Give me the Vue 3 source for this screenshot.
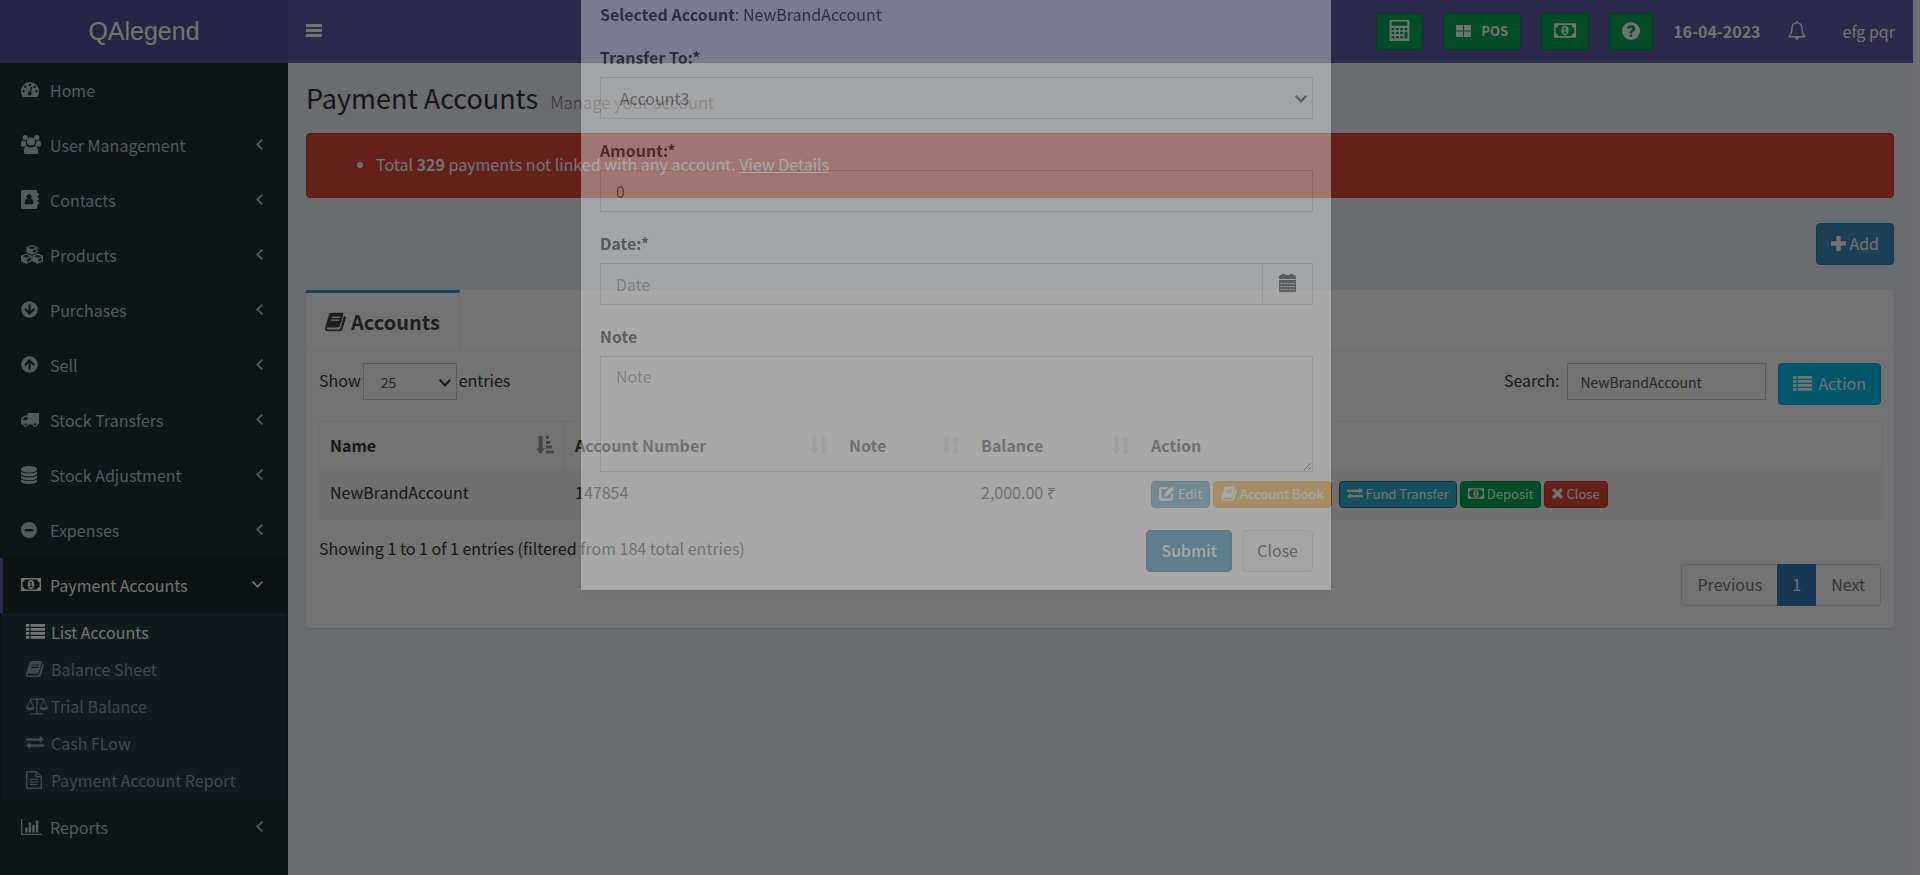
<script setup>
import { h, ref } from 'vue'

const glyphs = {
  bars: [16, 13, 'M0 0h16v3H0zM0 5h16v3H0zM0 10h16v3H0z'],
  home: [18, 15, 'M9 0a9 9 0 0 1 9 9c0 2-.5 3.900-1.400 5.400q-.3.600-1 .600H2.400q-.7 0-1-.6A10 10 0 0 1 0 9a9 9 0 0 1 9-9zM2.500 8a1.200 1.200 0 1 0 .1 0zM4.300 3.600a1.200 1.200 0 1 0 .1 0zM9 1.700a1.200 1.200 0 1 0 .1 0zM13.600 3.600a1.200 1.200 0 1 0 .1 0zM15.500 8a1.200 1.200 0 1 0 .1 0zM10 4.800l-1.300 4.700a2 2 0 1 0 1.300.4L11.200 5.200z'],
  users: [20, 19, 'M4.200 0a2.600 2.600 0 1 1 0 5.200a2.600 2.600 0 0 1 0-5.200zM15.800 0a2.600 2.600 0 1 1 0 5.200a2.600 2.600 0 0 1 0-5.200zM10 2.600a4 4 0 1 1 0 8a4 4 0 0 1 0-8zM5 6.200c-.3 1.700 0 3.100.9 4.300-1 0-1.900.4-2.500 1.100H1.700Q0 11.600 0 10c0-2.500.4-4.700 1.800-4.700 1 .8 2.200 1.100 3.200.9zM15 6.200c.3 1.700 0 3.100-.9 4.300 1 0 1.900.4 2.500 1.100h1.700q1.700 0 1.700-1.600c0-2.500-.4-4.700-1.800-4.700-1 .8-2.200 1.100-3.200.9zM6 11.200c2.400 1.700 5.600 1.700 8 0 2.400 0 3.200 2 3.200 5.200q0 2.600-2.600 2.600H5.400q-2.600 0-2.600-2.600c0-3.200.8-5.200 3.200-5.200z'],
  contacts: [18, 19, 'M1.600 0h13q1.600 0 1.600 1.600V3H17q.6 0 .6.600v1.800q0 .6-.6.600h-.8v1.200h.8q.6 0 .6.600v1.800q0 .6-.6.600h-.8v1.200h.8q.6 0 .6.600v1.800q0 .6-.6.600h-.8v3q0 1.600-1.600 1.600h-13Q0 19 0 17.400V1.600Q0 0 1.600 0zM8.100 4.200a2.600 2.600 0 1 0 0 5.200a2.600 2.600 0 0 0 0-5.200zM6 9.100c-1.700 0-2.200 1.600-2.200 3.600q0 1.500 1.400 1.500H11q1.400 0 1.400-1.500c0-2-.5-3.600-2.200-3.600-1.200 1-3 1-4.200 0z'],
  products: [22, 19, 'M11 0l5.500 2.300v4.900L11 9.700 5.500 7.200V2.300zM11 1.200L7.300 2.700 11 4.300l3.700-1.600zM11.800 8l3.400-1.500V3.900l-3.400 1.500zM5.500 8.400l5.300 2.300v5.500l-5.300 2.600L0 16.300v-5.600zM5.500 9.700l-3.700 1.500 3.700 1.600 3.700-1.600zM6.200 17l3.400-1.600v-2.900L6.200 14zM16.500 8.400l5.500 2.300v5.600l-5.500 2.500-5.300-2.600v-5.500zM16.500 9.700l-3.700 1.500 3.700 1.600 3.700-1.600zM17.200 17l3.400-1.600v-2.900L17.200 14z'],
  purchases: [512, 512, 'M504 256c0 137-111 248-248 248S8 393 8 256 119 8 256 8s248 111 248 248zm-143.600-28.900L288 302.600V120c0-13.300-10.700-24-24-24h-16c-13.300 0-24 10.700-24 24v182.600l-72.400-75.500c-9.300-9.700-24.800-9.900-34.300-.4l-10.900 11c-9.400 9.400-9.400 24.600 0 33.900L239 404.300c9.400 9.400 24.600 9.400 33.900 0l132.700-132.700c9.400-9.400 9.400-24.600 0-33.900l-10.900-11c-9.500-9.500-25-9.300-34.300.4z', 17, 17],
  sell: [512, 512, 'M8 256C8 119 119 8 256 8s248 111 248 248-111 248-248 248S8 393 8 256zm143.600 28.900l72.400-75.500V392c0 13.300 10.700 24 24 24h16c13.300 0 24-10.700 24-24V209.400l72.400 75.500c9.300 9.700 24.800 9.900 34.300.4l10.900-11c9.400-9.400 9.400-24.600 0-33.900L273 107.700c-9.400-9.400-24.600-9.400-33.900 0L106.300 240.400c-9.400 9.400-9.400 24.600 0 33.900l10.900 11c9.600 9.500 25.100 9.300 34.400-.4z', 17, 17],
  transfers: [18, 14, 'M7.500 0H17q1 0 1 1v9.800q0 .7-1 .7h-.8a2.300 2.300 0 1 1-4.600 0H6.900a2.300 2.300 0 1 1-4.600 0H.6Q0 11.500 0 10.800V6.700q0-.8.5-1.300l2.400-2.500q.5-.5 1.200-.5h2.400V1q0-1 1-1zM4.200 3.700L1.600 6.400v.5h4.900V3.700zM4.600 10.200a1.200 1.200 0 1 0 .1 0zM13.900 10.200a1.200 1.200 0 1 0 .1 0z'],
  adjust: [16, 18, 'M8 0c4.500 0 8 1.200 8 2.700v1c0 1.500-3.500 2.700-8 2.700S0 5.200 0 3.700v-1C0 1.200 3.500 0 8 0zM0 5.800c3 2 13 2 16 0v1.900c0 1.500-3.500 2.600-8 2.600S0 9.200 0 7.700zM0 9.700c3 2 13 2 16 0v1.800c0 1.500-3.500 2.700-8 2.700S0 13 0 11.500zM0 13.500c3 2 13 2 16 0v1.800c0 1.500-3.500 2.700-8 2.700s-8-1.200-8-2.700z'],
  expenses: [16, 16, 'M8 0a8 8 0 1 1 0 16A8 8 0 0 1 8 0zM4.200 6.900q-.6 0-.6.600v1.200q0 .6.600.6h7.600q.6 0 .6-.6V7.500q0-.6-.6-.6z'],
  money: [20, 13, 'M0 0h20v13H0zM4 1.500Q3.800 3.700 1.500 4v5q2.300.3 2.500 2.500h12q.2-2.200 2.500-2.500V4Q16.200 3.700 16 1.500zM10 2c2 0 3.300 2 3.300 4.500S12 11 10 11 6.700 9 6.700 6.500 8 2 10 2zM8.300 4.500L9 5.200l.5-.3v3.400H8.400v1h3.300v-1h-1V3.500h-1z'],
  list: [19, 15, 'M0 0h3.500v2.800H0zM0 4h3.500v2.800H0zM0 8h3.500v2.800H0zM0 12h3.500v2.800H0zM4.700 0H19v2.800H4.700zM4.700 4H19v2.800H4.700zM4.700 8H19v2.800H4.700zM4.700 12H19v2.800H4.700z'],
  book: [18, 16, 'M5.400 0h9.200q1.500 0 1.100 1.600l-2.900 9.700q-.5 1.500-2 1.500H2.400c-1.200 0-1.300 1.700.3 1.700h9q.9 0 1.200-.8l3.300-10.800c1.400.4 1.900 1.100 1.500 2.300l-2.800 9.300Q14.400 16 12.900 16H2.700C.6 16-.4 14.300.2 12.700L3.300 2Q3.900 0 5.400 0zM6.200 3.400l-.3 1.100h7l.3-1.100zM5.500 5.800l-.3 1.100h7l.3-1.100z'],
  balance: [22, 18, 'M10.100 1.500a1.100 1.100 0 0 1 1.800 0H18v1.200h-.2l4.200 8.200c0 3-8.400 3-8.400 0l3.700-8.200h-5.400a1.100 1.100 0 0 1-.3.400v13.100h5.600v1.300H4.200v-1.300h6.100V3.100a1.100 1.100 0 0 1-.3-.4H4.700l3.700 8.200c0 3-8.400 3-8.400 0l4.100-8.200H4V1.500zM4.200 4.300l-3 6.300h6zM17.700 4.300l-3 6.300h6z'],
  exchange: [18, 13, 'M13.700 0L18 3.500 13.700 7V4.800H0V2.200h13.700zM4.300 6L0 9.500 4.300 13v-2.200H18V8.200H4.300z'],
  file: [16, 18, 'M1.200 0h8.600q.8 0 1.400.6l4.200 4.200q.6.600.6 1.400v10.600q0 1.200-1.200 1.200H1.200Q0 18 0 16.800V1.200Q0 0 1.200 0zM1.400 1.400v15.200h13.200V6.500H9.500V1.400zM10.900 1.800v3.300h3.300zM4 7.800h8V9H4zM4 10.300h8v1.200H4zM4 12.800h8V14H4z'],
  chart: [21, 16, 'M0 0h1.300v14.700H21V16H0zM4 8.500h2.500v5H4zM7.600 3.500h2.500v10H7.600zM11.200 5.800h2.500v7.700h-2.500zM14.800 1.500h2.500v12h-2.500z'],
  left: [7, 11, 'M5.700 0L7 1.200 2.600 5.500 7 9.800 5.700 11 0 5.500z'],
  down: [11, 7, 'M0 1.300L1.200 0l4.300 4.400L9.800 0 11 1.300 5.500 7z'],
  calc: [20, 20, 'M2 0h16q1.500 0 1.500 1.500v17q0 1.500-1.500 1.500H2Q.5 20 .5 18.500v-17Q.5 0 2 0zM2.500 1.500V5.500h15V1.500zM2.500 7.500V9.700h2.600V7.500zM6.500 7.500V9.700h2.800V7.500zM10.700 7.500V9.700h2.800V7.500zM14.900 7.500V9.700h2.600V7.500zM2.500 11.300v2.300h2.600v-2.300zM6.500 11.300v2.300h2.800v-2.300zM10.700 11.300v2.300h2.800v-2.300zM2.500 15.200v2.500h2.600v-2.500zM6.500 15.200v2.500h2.800v-2.500zM10.700 15.200v2.500h2.800v-2.500zM14.900 11.300v6.400h2.600v-6.400z', 21, 21],
  grid: [15, 12, 'M1 0h6v5.500H0V1q0-1 1-1zM8 0h6q1 0 1 1v4.500H8zM0 6.500h7V12H1q-1 0-1-1zM8 6.500h7V11q0 1-1 1H8z'],
  help: [18, 18, 'M9 0a9 9 0 1 1 0 18A9 9 0 0 1 9 0zM7.600 12.500V15h2.600v-2.500zM4.900 5.800l1.800 1.400c1.400-2 3.600-1.500 3.500-.2 0 1.200-2.600 1.300-2.600 3.700v.7h2.600c0-1.700 3-1.900 3-4.700 0-4.300-6-5.300-8.300-.9z'],
  bell: [18, 19, 'M9 0q1 0 1 1.200c3.300.5 4.700 3 4.700 5.600 0 4.700 1 6.700 3 8.300q0 1.300-1.200 1.300h-5.200a2.300 2.300 0 0 1-4.600 0H1.500Q.3 16.400.3 15.100c2-1.600 3-3.600 3-8.300 0-2.600 1.400-5.100 4.700-5.600Q8 0 9 0zM9 2.400c-3 0-4.400 2-4.400 4.400 0 4.200-.8 6.500-2.300 8.200h13.400c-1.500-1.700-2.300-4-2.300-8.200 0-2.400-1.400-4.400-4.400-4.400z'],
  plus: [14, 14, 'M5 0h4v5h5v4H9v5H5V9H0V5h5z', 15, 15],
  calendar: [17, 18, 'M2 1h1V0h3v1h5V0h3v1h1q2 0 2 2v2H0V3q0-2 2-2zM0 6h17v11q0 1-1 1H1q-1 0-1-1zM1.500 9v1h2V9zM4.500 9v1h2V9zM7.500 9v1h2V9zM10.500 9v1h2V9zM13.500 9v1h2V9zM1.500 12v1h2v-1zM4.500 12v1h2v-1zM7.500 12v1h2v-1zM10.500 12v1h2v-1zM13.500 12v1h2v-1zM1.500 15v1h2v-1zM4.500 15v1h2v-1zM7.500 15v1h2v-1zM10.500 15v1h2v-1zM13.500 15v1h2v-1z'],
  edit: [16, 15, 'M3.200 1h6.300L7.300 3H3.700Q2.300 3 2.300 4.400v6.800q0 1.400 1.400 1.400h6.800q1.400 0 1.400-1.400V8.800l2.100-2v5Q14 15 11 15H3.200Q0 15 0 11.800V4.200Q0 1 3.200 1zM12.300.6l2.700 2.700L8.600 9.700 5 10.700 6 7zM13.200 0h1.300L16 1.400v1.200z'],
  close: [12, 12, 'M2.500 0L6 3.400 9.500 0 12 2.500 8.600 6 12 9.500 9.500 12 6 8.600 2.500 12 0 9.500 3.400 6 0 2.500z'],
  sorted: [18, 18, 'M2.500 0h4v12.500h2.500L4.500 18 0 12.500h2.500zM10 0h3v3h-3zM10 5h4.500v3H10zM10 9.500h6v3h-6zM10 14.500h8v3h-8z'],
  sort: [18, 18, 'M2.500 0h4v12.500H9L4.500 18 0 12.500h2.500zM11.500 18h4V5.500H18L13.500 0 9 5.500h2.500z'],
  caret: [12, 8, 'M0 1.500L1.500 0 6 4.700 10.500 0 12 1.500 6 8z']
}

const Icon = ({ name }) => {
  const [w, t, d, pw, ph] = glyphs[name]
  return h('svg', { class: 'icon', width: pw || w, height: ph || t, viewBox: `0 0 ${w} ${t}`, 'aria-hidden': 'true' },
    [h('path', { d, fill: 'currentColor', 'fill-rule': 'evenodd' })])
}
Icon.props = ['name']

const menu = [
  { label: 'Home', icon: 'home' },
  { label: 'User Management', icon: 'users', more: true },
  { label: 'Contacts', icon: 'contacts', more: true },
  { label: 'Products', icon: 'products', more: true },
  { label: 'Purchases', icon: 'purchases', more: true },
  { label: 'Sell', icon: 'sell', more: true },
  { label: 'Stock Transfers', icon: 'transfers', more: true },
  { label: 'Stock Adjustment', icon: 'adjust', more: true },
  { label: 'Expenses', icon: 'expenses', more: true },
  {
    label: 'Payment Accounts', icon: 'money', open: true,
    children: [
      { label: 'List Accounts', icon: 'list', current: true },
      { label: 'Balance Sheet', icon: 'book' },
      { label: 'Trial Balance', icon: 'balance' },
      { label: 'Cash FLow', icon: 'exchange' },
      { label: 'Payment Account Report', icon: 'file' }
    ]
  },
  { label: 'Reports', icon: 'chart', more: true }
]

const columns = [
  { label: 'Name', key: 'name', sort: 'sorted' },
  { label: 'Account Number', key: 'number', sort: 'sort' },
  { label: 'Note', key: 'note', sort: 'sort' },
  { label: 'Balance', key: 'balance', sort: 'sort' },
  { label: 'Action', key: 'action' }
]

const rowActions = [
  { label: 'Edit', icon: 'edit', tone: 'primary' },
  { label: 'Account Book', icon: 'book', tone: 'warning' },
  { label: 'Fund Transfer', icon: 'exchange', tone: 'sky' },
  { label: 'Deposit', icon: 'money', tone: 'success' },
  { label: 'Close', icon: 'close', tone: 'danger' }
]

const search = ref('NewBrandAccount')
const amount = ref('0')
</script>

<template>
  <div class="page">
    <aside class="sidebar">
      <a href="#" class="logo">QAlegend</a>
      <nav>
        <ul class="menu">
          <li v-for="item in menu" :key="item.label">
            <a href="#" class="menu-link" :class="{ open: item.open }">
              <span class="menu-icon"><Icon :name="item.icon" /></span>
              <span class="menu-label">{{ item.label }}</span>
              <Icon v-if="item.more" name="left" />
              <Icon v-if="item.open" name="down" />
            </a>
            <ul v-if="item.children" class="submenu">
              <li v-for="child in item.children" :key="child.label">
                <a href="#" class="sub-link" :class="{ current: child.current }">
                  <span class="menu-icon"><Icon :name="child.icon" /></span>{{ child.label }}
                </a>
              </li>
            </ul>
          </li>
        </ul>
      </nav>
    </aside>

    <div class="main">
      <header class="topbar">
        <button class="plain" aria-label="Toggle navigation"><Icon name="bars" /></button>
        <div class="tools">
          <button class="tool" aria-label="Calculator"><Icon name="calc" /></button>
          <button class="tool"><Icon name="grid" />POS</button>
          <button class="tool cash" aria-label="Today's profit"><Icon name="money" /></button>
          <button class="tool" aria-label="Help"><Icon name="help" /></button>
        </div>
        <strong class="date">16-04-2023</strong>
        <button class="plain bell" aria-label="Notifications"><Icon name="bell" /></button>
        <a href="#" class="user">efg pqr</a>
      </header>

      <main class="content">
        <h1>Payment Accounts <small>Manage your account</small></h1>

        <div class="alert" role="alert">
          <ul>
            <li>Total <b>329</b> payments not linked with any account. <a href="#">View Details</a></li>
          </ul>
        </div>

        <div class="add-row">
          <button class="btn primary add"><Icon name="plus" />Add</button>
        </div>

        <section class="box">
          <div class="tabs">
            <a href="#" class="tab"><Icon name="book" />Accounts</a>
          </div>
          <div class="pane">
            <div class="toolbar">
              <label class="length">Show
                <span class="select small">
                  <select><option>25</option></select>
                  <Icon name="caret" />
                </span>
                entries
              </label>
              <label class="search">Search:<input v-model="search" type="search"></label>
              <button class="btn cyan"><Icon name="list" />Action</button>
            </div>

            <table>
              <thead>
                <tr>
                  <th v-for="c in columns" :key="c.key" :class="c.key">
                    <span class="th-inner">{{ c.label }}<Icon v-if="c.sort" :name="c.sort" :class="c.sort" /></span>
                  </th>
                </tr>
              </thead>
              <tbody>
                <tr>
                  <td>NewBrandAccount</td>
                  <td>147854</td>
                  <td></td>
                  <td>2,000.00 ₹</td>
                  <td class="actions-cell">
                    <div class="actions">
                      <button v-for="a in rowActions" :key="a.label" class="mini" :class="a.tone">
                        <Icon :name="a.icon" />{{ a.label }}
                      </button>
                    </div>
                  </td>
                </tr>
              </tbody>
            </table>

            <p class="info">Showing 1 to 1 of 1 entries (filtered from 184 total entries)</p>
            <div class="pager-row">
              <nav class="pager">
                <a href="#">Previous</a><a href="#" class="on">1</a><a href="#">Next</a>
              </nav>
            </div>
          </div>
        </section>
      </main>
    </div>
  </div>

  <div class="backdrop"></div>

  <div class="modal">
    <form class="dialog" @submit.prevent>
      <div class="fields">
        <p class="selected"><b>Selected Account</b>: NewBrandAccount</p>
        <div class="field">
          <label for="to">Transfer To:*</label>
          <span class="select">
            <select id="to"><option>Account3</option></select>
            <Icon name="caret" />
          </span>
        </div>
        <div class="field">
          <label for="amount">Amount:*</label>
          <input id="amount" v-model="amount" type="text">
        </div>
        <div class="field">
          <label for="date">Date:*</label>
          <div class="group">
            <input id="date" type="text" placeholder="Date">
            <span class="addon"><Icon name="calendar" /></span>
          </div>
        </div>
        <div class="field">
          <label for="note">Note</label>
          <textarea id="note" placeholder="Note"></textarea>
        </div>
      </div>
      <footer class="dialog-foot">
        <button type="submit" class="btn primary submit">Submit</button>
        <button type="button" class="btn default">Close</button>
      </footer>
    </form>
  </div>
</template>

<style>
html, body {
  margin: 0;
  overflow: hidden;
}
body, button, input, select, textarea {
  font-family: "Noto Sans CJK SC", "Noto Sans", sans-serif;
  font-size: 16px;
  line-height: 24px;
}
</style>

<style scoped>
* { box-sizing: border-box; }
ul { list-style: none; margin: 0; padding: 0; }
a { color: inherit; text-decoration: none; }
button { cursor: pointer; }
.icon { flex: none; display: block; }

.page {
  display: flex;
  min-height: 100vh;
  padding-right: 7px;
  background: #f5f5f5;
  color: #333;
}

.sidebar {
  flex: 0 0 288px;
  background: #222d32;
  color: #b8c7ce;
}
.logo {
  display: flex;
  align-items: center;
  justify-content: center;
  height: 63px;
  padding-bottom: 2px;
  background: #555299;
  color: #fff;
  font: 25px/32px "Liberation Sans", Arial, sans-serif;
}
.menu-link {
  display: flex;
  align-items: center;
  height: 55px;
  padding: 0 25px 2px 18px;
  border-left: 3px solid transparent;
}
.menu-icon { display: flex; flex: 0 0 29px; }
.menu-label { flex: 1; }
.menu-link.open {
  background: #1e282c;
  border-left-color: #605ca8;
  color: #fff;
}
.submenu {
  margin: 0 2px 0 1px;
  padding-bottom: 2px;
  background: #2c3b41;
  color: #8aa4af;
}
.sub-link {
  display: flex;
  align-items: center;
  height: 37px;
  padding-left: 25px;
}
.sub-link .menu-icon { flex-basis: 25px; }
.sub-link.current { color: #fff; }

.main {
  flex: 1;
  min-width: 0;
  background: #ecf0f5;
}
.topbar {
  display: flex;
  align-items: center;
  height: 63px;
  padding: 0 18px;
  background: #605ca8;
  color: #fff;
}
.plain {
  display: flex;
  padding: 0 0 2px;
  border: 0;
  background: none;
  color: inherit;
}
.tools {
  display: flex;
  gap: 20px;
  margin-left: auto;
}
.tool {
  display: flex;
  align-items: center;
  gap: 10px;
  height: 37px;
  padding: 0 12px 2px;
  border: 1px solid #008d4c;
  background: #00a65a;
  color: #fff;
  font-size: 13px;
  font-weight: bold;
}
.cash .icon { width: 22px; height: 15px; }
.date { margin-left: 20px; padding-bottom: 2px; }
.bell { margin: 0 37px 0 27px; }
.user { padding-bottom: 2px; }

.content { padding: 17px 19px 19px 18px; }
h1 {
  display: flex;
  align-items: baseline;
  gap: 12px;
  height: 36px;
  margin: 0;
  font-size: 27px;
  font-weight: 400;
  line-height: 36px;
}
h1 small {
  color: #777;
  font-size: 17px;
  font-weight: 300;
  line-height: 24px;
}
.alert {
  margin-top: 17px;
  padding: 18px 19px 21px;
  border: 1px solid #d73925;
  border-radius: 4px;
  background: #dd4b39;
  color: #fff;
}
.alert ul { padding-left: 50px; list-style: disc; }
.alert a { text-decoration: underline; }
.add-row {
  display: flex;
  justify-content: flex-end;
  margin: 25px 0;
}
.btn {
  display: flex;
  align-items: center;
  gap: 6px;
  height: 42px;
  padding: 0 14px 2px;
  border: 1px solid;
  border-radius: 4px;
  color: #fff;
}
.mini {
  display: flex;
  align-items: center;
  gap: 3px;
  height: 27px;
  padding: 0 7px 1px;
  border: 1px solid;
  border-radius: 4px;
  color: #fff;
  font-size: 13px;
  line-height: 20px;
}
.mini .icon { width: 16px; height: 15px; }
.add { gap: 3px; }
.primary { background: #3c8dbc; border-color: #367fa9; }
.cyan { background: #00c0ef; border-color: #00acd6; }
.warning { margin-right: 4px; background: #f39c12; border-color: #e08e0b; }
.sky { background: #31b0d5; border-color: #1b6d85; }
.success { background: #00a65a; border-color: #008d4c; }
.danger { background: #dd4b39; border-color: #d73925; }
.danger .icon { width: 11px; }
.default { background: #f4f4f4; border-color: #ddd; color: #444; }

.box {
  border-radius: 4px;
  background: #fff;
  box-shadow: 0 1px 1px rgba(0, 0, 0, .1);
}
.tabs {
  display: flex;
  height: 61px;
  border-bottom: 1px solid #f4f4f4;
}
.tab {
  display: flex;
  align-items: center;
  gap: 5px;
  padding: 1px 19px 0;
  border-top: 3px solid #3c8dbc;
  border-right: 1px solid #f4f4f4;
  color: #444;
  font-size: 20px;
  font-weight: bold;
}
.tab .icon { width: 21px; height: 20px; }
.pane { padding: 12px 11px 22px 13px; }
.toolbar {
  display: flex;
  align-items: flex-start;
}
.toolbar label { display: flex; align-items: flex-start; line-height: 34px; }
.length { gap: 2px; margin-right: auto; }
input, select, textarea {
  display: block;
  width: 100%;
  height: 42px;
  margin: 0;
  padding: 0 15px;
  border: 1px solid #d2d6de;
  border-radius: 0;
  background: #fff;
  color: #555;
  outline: 0;
}
select { appearance: none; padding-left: 19px; }
::placeholder { color: #999; opacity: 1; }
.select {
  position: relative;
  display: block;
}
.select .icon {
  position: absolute;
  right: 6px;
  top: 50%;
  margin-top: -3px;
}
.select.small { width: 94px; }
.small select, .search input {
  height: 37px;
  border-color: #ccc;
  font-size: 14px;
}
.small select { padding-left: 17px; }
.search { gap: 8px; margin-right: 12px; }
.search input { width: 199px; padding: 0 12px; }
.toolbar .btn { margin-right: 2px; }

table {
  width: 100%;
  margin-top: 16px;
  border-collapse: collapse;
  table-layout: fixed;
  border: 1px solid #f4f4f4;
}
th, td {
  padding: 0 10px;
  border-left: 1px solid #f4f4f4;
  text-align: left;
}
th { height: 46px; }
td { height: 52px; padding-bottom: 3px; background: #f9f9f9; }
.th-inner { display: flex; align-items: center; justify-content: space-between; }
.th-inner .icon { color: #999; }
.th-inner .sort { color: #ddd; }
.name { width: 245px; }
.number { width: 274px; }
.note { width: 132px; }
.balance { width: 170px; }
.actions-cell { padding-top: 2px; padding-bottom: 0; }
.actions { display: flex; gap: 3px; }
.info { margin: 16px 0 4px; }
.pager-row { display: flex; justify-content: flex-end; padding-right: 2px; }
.pager {
  display: flex;
  height: 42px;
  border: 1px solid #ddd;
  border-radius: 4px;
  color: #777;
  line-height: 38px;
}
.pager a { padding: 0 15px; }
.pager .on { margin: -1px 0; padding: 1px 15px; background: #337ab7; color: #fff; }

.backdrop {
  position: fixed;
  inset: 0;
  background: rgba(0, 0, 0, .55);
}
.modal {
  position: fixed;
  inset: 0 8px auto 0;
  opacity: .38;
}
.dialog {
  width: 750px;
  margin: 0 auto;
  background: #fff;
  color: #333;
  box-shadow: 0 2px 3px rgba(0, 0, 0, .125);
}
.fields { padding: 2px 18px 19px 19px; }
.selected { margin: 0; }
.field { margin-top: 19px; }
.field label { display: block; margin-bottom: 8px; font-weight: bold; }
.dialog .icon { color: #444; }
.group { display: flex; }
.addon {
  display: flex;
  align-items: center;
  justify-content: center;
  flex: 0 0 50px;
  padding-bottom: 2px;
  border: 1px solid #d2d6de;
  border-left: 0;
}
textarea {
  height: 116px;
  padding: 7px 15px;
  resize: vertical;
}
.dialog-foot {
  display: flex;
  justify-content: flex-end;
  gap: 10px;
  padding: 39px 18px 18px;
}
.submit { font-weight: 500; }
</style>
